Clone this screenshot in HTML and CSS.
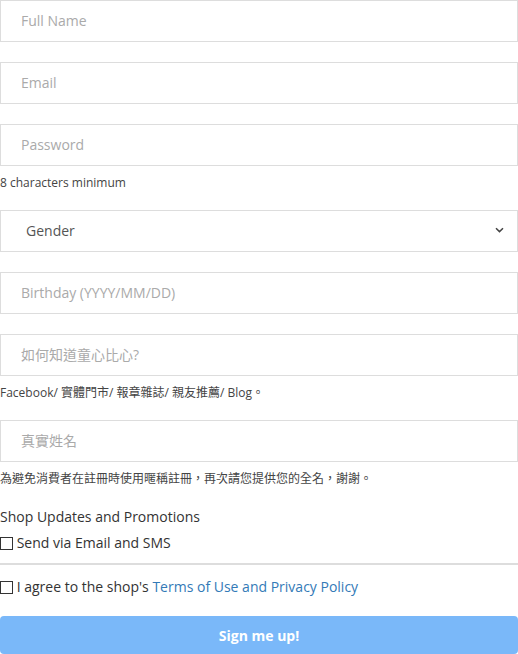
FILE: index.html
```html
<!DOCTYPE html>
<html lang="zh-Hant">
<head>
<meta charset="utf-8">
<title>Sign up</title>
<link rel="stylesheet" href="styles.css">
</head>
<body>
<form class="signup">
  <div class="group">
    <input class="field" type="text" placeholder="Full Name">
  </div>
  <div class="group">
    <input class="field" type="email" placeholder="Email">
  </div>
  <div class="group">
    <input class="field" type="password" placeholder="Password">
    <p class="hint">8 characters minimum</p>
  </div>
  <div class="group">
    <div class="select-wrap">
      <select class="field select">
        <option>Gender</option>
        <option>Male</option>
        <option>Female</option>
      </select>
      <svg class="chevron" width="9" height="6" viewBox="0 0 9 6" aria-hidden="true">
        <path d="M1 1.2 L4.5 4.6 L8 1.2" fill="none" stroke="#444" stroke-width="1.5"/>
      </svg>
    </div>
  </div>
  <div class="group">
    <input class="field" type="text" placeholder="Birthday (YYYY/MM/DD)">
  </div>
  <div class="group">
    <input class="field" type="text" placeholder="如何知道童心比心?">
    <p class="hint">Facebook/ 實體門市/ 報章雜誌/ 親友推薦/ Blog。</p>
  </div>
  <div class="group">
    <input class="field" type="text" placeholder="真實姓名">
    <p class="hint">為避免消費者在註冊時使用暱稱註冊，再次請您提供您的全名，謝謝。</p>
  </div>
  <div class="updates">
    <p class="label">Shop Updates and Promotions</p>
    <label class="check"><input class="box" type="checkbox"> Send via Email and SMS</label>
  </div>
  <hr class="divider">
  <label class="check agree"><input class="box" type="checkbox"> I agree to the shop's <a class="link" href="#">Terms of Use and Privacy Policy</a></label>
  <button class="submit" type="submit">Sign me up!</button>
</form>
</body>
</html>
```

FILE: styles.css
```css
* {
  box-sizing: border-box;
}

html, body {
  margin: 0;
  padding: 0;
  background: #fff;
}

body {
  font-family: "Open Sans", "Noto Sans CJK TC", sans-serif;
  font-size: 14px;
  color: #333;
}

.signup {
  display: flex;
  flex-direction: column;
  width: 518px;
}

.group {
  margin-bottom: 20px;
}

.group:has(.hint) {
  margin-bottom: 19px;
}

.field {
  display: block;
  width: 100%;
  height: 42px;
  margin: 0;
  padding: 0 20px 2px;
  border: 1px solid #ddd;
  border-radius: 0;
  background: #fff;
  font-family: "Open Sans", "Noto Sans CJK TC", sans-serif;
  font-size: 14px;
  color: #555;
  outline: none;
}

.field::placeholder {
  color: #aaa;
  opacity: 1;
}

.select-wrap {
  position: relative;
}

.select {
  appearance: none;
  -webkit-appearance: none;
  padding-left: 25px;
  color: #555;
}

.chevron {
  position: absolute;
  right: 14px;
  top: 17px;
  pointer-events: none;
}

.hint {
  margin: 8px 0 0;
  font-size: 12px;
  line-height: 17px;
  color: #444;
}

.updates {
  display: flex;
  flex-direction: column;
  gap: 6px;
  margin-top: 1px;
}

.label {
  margin: 0;
  line-height: 20px;
  color: #333;
}

.check {
  display: block;
  line-height: 20px;
  color: #333;
}

.box {
  appearance: none;
  -webkit-appearance: none;
  display: inline-block;
  width: 13px;
  height: 13px;
  margin: 0;
  border: 1px solid #333;
  border-radius: 0;
  background: #fff;
  vertical-align: -2px;
}

.divider {
  margin: 10px 0 12px;
  border: 0;
  height: 2px;
  background: #ddd;
}

.link {
  color: #337ab7;
  text-decoration: none;
}

.submit {
  display: block;
  width: 100%;
  height: 38px;
  margin-top: 19px;
  border: 0;
  border-radius: 4px;
  background: #7ab8f9;
  color: #fff;
  font-family: "Open Sans", sans-serif;
  font-size: 14px;
  font-weight: 700;
  cursor: pointer;
}
```
